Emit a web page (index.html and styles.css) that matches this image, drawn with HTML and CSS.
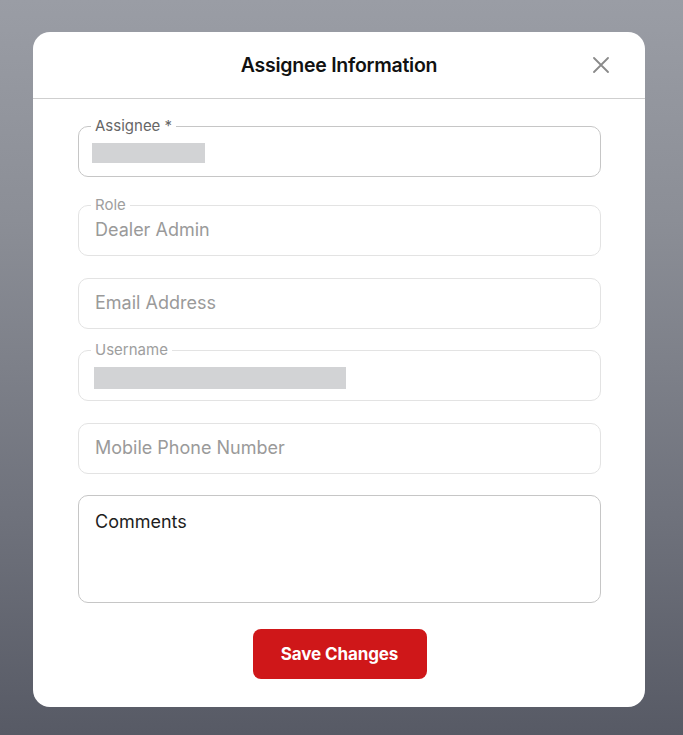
FILE: index.html
```html
<!DOCTYPE html>
<html lang="en">
<head>
<meta charset="utf-8">
<title>Assignee Information</title>
<link rel="stylesheet" href="styles.css">
</head>
<body>
<div class="backdrop">
  <div class="modal">
    <div class="modal-header">
      <h2 class="modal-title">Assignee Information</h2>
      <button class="close-btn" aria-label="Close">
        <svg width="16" height="16" viewBox="0 0 16 16"><path d="M1 1 L15 15 M15 1 L1 15" stroke="#8a8a8a" stroke-width="1.8" stroke-linecap="round" fill="none"/></svg>
      </button>
    </div>
    <div class="modal-body">
      <div class="field field-active field-first">
        <span class="field-label">Assignee *</span>
        <span class="redacted redacted-short"></span>
      </div>
      <div class="field field-disabled">
        <span class="field-label label-disabled">Role</span>
        <span class="field-value muted">Dealer Admin</span>
      </div>
      <div class="field field-disabled">
        <span class="field-value muted">Email Address</span>
      </div>
      <div class="field field-disabled">
        <span class="field-label label-disabled">Username</span>
        <span class="redacted redacted-long"></span>
      </div>
      <div class="field field-disabled">
        <span class="field-value muted">Mobile Phone Number</span>
      </div>
      <div class="field field-active field-textarea">
        <span class="field-value dark">Comments</span>
      </div>
      <div class="actions">
        <button class="save-btn">Save Changes</button>
      </div>
    </div>
  </div>
</div>
</body>
</html>
```
FILE: styles.css
```css
* { box-sizing: border-box; }
html, body { margin: 0; padding: 0; }
body {
  font-family: Inter, "Noto Sans", "Liberation Sans", sans-serif;
  width: 683px;
  height: 735px;
  overflow: hidden;
  background: linear-gradient(180deg, #9a9da5 0%, #8b8e96 30%, #6f727c 70%, #575a65 100%);
}
.backdrop {
  padding: 32px 0 0 33px;
}
.modal {
  width: 612px;
  height: 675px;
  background: #fff;
  border-radius: 17px;
  display: flex;
  flex-direction: column;
  overflow: hidden;
}
.modal-header {
  height: 67px;
  flex-shrink: 0;
  border-bottom: 1px solid #cfcfcf;
  display: flex;
  align-items: center;
  justify-content: center;
  position: relative;
}
.modal-title {
  margin: 0;
  font-size: 19.5px;
  font-weight: 600;
  color: #111;
  letter-spacing: -0.25px;
}
.close-btn {
  position: absolute;
  right: 36px;
  top: 25px;
  width: 16px;
  height: 16px;
  padding: 0;
  border: 0;
  background: none;
  display: flex;
}
.modal-body {
  padding: 27px 44px 28px 45px;
  display: flex;
  flex-direction: column;
  gap: 21.6px;
}
.field {
  position: relative;
  height: 51px;
  flex-shrink: 0;
  border: 1px solid #e3e3e3;
  border-radius: 10px;
  display: flex;
  align-items: center;
  padding: 0 16px;
}
.field-first { margin-bottom: 6.4px; }
.field-active { border-color: #c6c6c6; }
.field-textarea {
  height: 108px;
  align-items: flex-start;
  padding-top: 15px;
}
.field-label {
  position: absolute;
  top: -11px;
  left: 12px;
  padding: 0 4px;
  background: #fff;
  font-size: 15px;
  line-height: 20px;
  color: #666;
}
.label-disabled { color: #9e9e9e; }
.field-value {
  font-size: 18px;
  line-height: 22px;
}
.muted { color: #9a9a9a; }
.dark { color: #1e1e1e; }
.redacted {
  display: block;
  background: #d2d3d5;
}
.redacted-short {
  width: 113px;
  height: 20px;
  margin-left: -3px;
  margin-top: 2px;
}
.redacted-long {
  width: 252px;
  height: 22px;
  margin-left: -1px;
  margin-top: 4px;
}
.actions {
  display: flex;
  justify-content: center;
  margin-top: 4px;
}
.save-btn {
  width: 174px;
  height: 50px;
  border: 0;
  border-radius: 8px;
  background: #cf1719;
  color: #fff;
  font-family: Inter, "Noto Sans", "Liberation Sans", sans-serif;
  font-size: 17px;
  font-weight: 700;
  letter-spacing: -0.1px;
}
```
